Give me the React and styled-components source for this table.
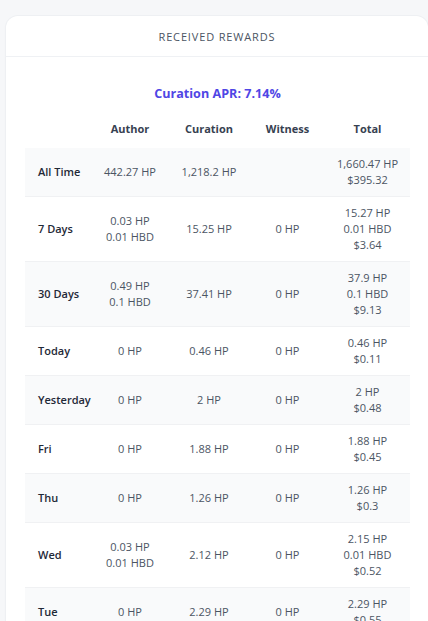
import styled, { createGlobalStyle } from "styled-components";

const GlobalStyle = createGlobalStyle`
  html, body {
    margin: 0;
    padding: 0;
    height: 621px;
    overflow: hidden;
    background-color: #f6f7f9;
    font-family: "Open Sans", "Noto Sans", sans-serif;
  }
`;

const Page = styled.div`
  padding: 16px 0 0 6px;
`;

const Card = styled.section`
  background-color: #ffffff;
  border-radius: 12px;
  box-shadow: 0 0 0 1px #eef0f3, 0 1px 3px rgba(0, 0, 0, 0.04);
  width: 422px;
`;

const CardHeader = styled.div`
  height: 40px;
  display: flex;
  align-items: center;
  justify-content: center;
  border-bottom: 1px solid #eff1f4;
  font-size: 11px;
  letter-spacing: 0.85px;
  color: #4b5563;
  text-transform: uppercase;
`;

const CardBody = styled.div`
  padding: 27px 18px 0 19px;
`;

const Apr = styled.h3`
  margin: 0;
  text-align: center;
  font-size: 12.6px;
  line-height: 20px;
  font-weight: 700;
  color: #4f46e5;
`;

const Grid = styled.div`
  display: grid;
  grid-template-columns: 67px 76px 82px 75px 1fr;
  align-items: center;
  padding: ${(p) => (p.$head ? "17px 0 11px" : "8px 0")};
  background-color: ${(p) => (p.$shade ? "#f9fafb" : "#ffffff")};
  border-bottom: ${(p) => (p.$head ? "none" : "1px solid #f0f1f3")};
`;

const HeadCell = styled.div`
  text-align: center;
  font-size: 11px;
  line-height: 16px;
  font-weight: 700;
  color: #374151;
`;

const Label = styled.div`
  padding-left: 13px;
  font-size: 11px;
  line-height: 16px;
  font-weight: 600;
  color: #1f2937;
`;

const Cell = styled.div`
  text-align: center;
  font-size: 11px;
  line-height: 16px;
  color: #4b5563;
`;

const rows = [
  ["All Time", ["442.27 HP"], ["1,218.2 HP"], [], ["1,660.47 HP", "$395.32"]],
  ["7 Days", ["0.03 HP", "0.01 HBD"], ["15.25 HP"], ["0 HP"], ["15.27 HP", "0.01 HBD", "$3.64"]],
  ["30 Days", ["0.49 HP", "0.1 HBD"], ["37.41 HP"], ["0 HP"], ["37.9 HP", "0.1 HBD", "$9.13"]],
  ["Today", ["0 HP"], ["0.46 HP"], ["0 HP"], ["0.46 HP", "$0.11"]],
  ["Yesterday", ["0 HP"], ["2 HP"], ["0 HP"], ["2 HP", "$0.48"]],
  ["Fri", ["0 HP"], ["1.88 HP"], ["0 HP"], ["1.88 HP", "$0.45"]],
  ["Thu", ["0 HP"], ["1.26 HP"], ["0 HP"], ["1.26 HP", "$0.3"]],
  ["Wed", ["0.03 HP", "0.01 HBD"], ["2.12 HP"], ["0 HP"], ["2.15 HP", "0.01 HBD", "$0.52"]],
  ["Tue", ["0 HP"], ["2.29 HP"], ["0 HP"], ["2.29 HP", "$0.55"]],
];

function Values({ lines }) {
  return (
    <Cell>
      {lines.map((line) => (
        <div key={line}>{line}</div>
      ))}
    </Cell>
  );
}

export default function App() {
  return (
    <>
      <GlobalStyle />
      <Page>
        <Card>
          <CardHeader>Received Rewards</CardHeader>
          <CardBody>
            <Apr>Curation APR: 7.14%</Apr>
            <Grid $head>
              <div />
              <HeadCell>Author</HeadCell>
              <HeadCell>Curation</HeadCell>
              <HeadCell>Witness</HeadCell>
              <HeadCell>Total</HeadCell>
            </Grid>
            {rows.map(([label, author, curation, witness, total], i) => (
              <Grid key={label} $shade={i % 2 === 0}>
                <Label>{label}</Label>
                <Values lines={author} />
                <Values lines={curation} />
                <Values lines={witness} />
                <Values lines={total} />
              </Grid>
            ))}
          </CardBody>
        </Card>
      </Page>
    </>
  );
}
